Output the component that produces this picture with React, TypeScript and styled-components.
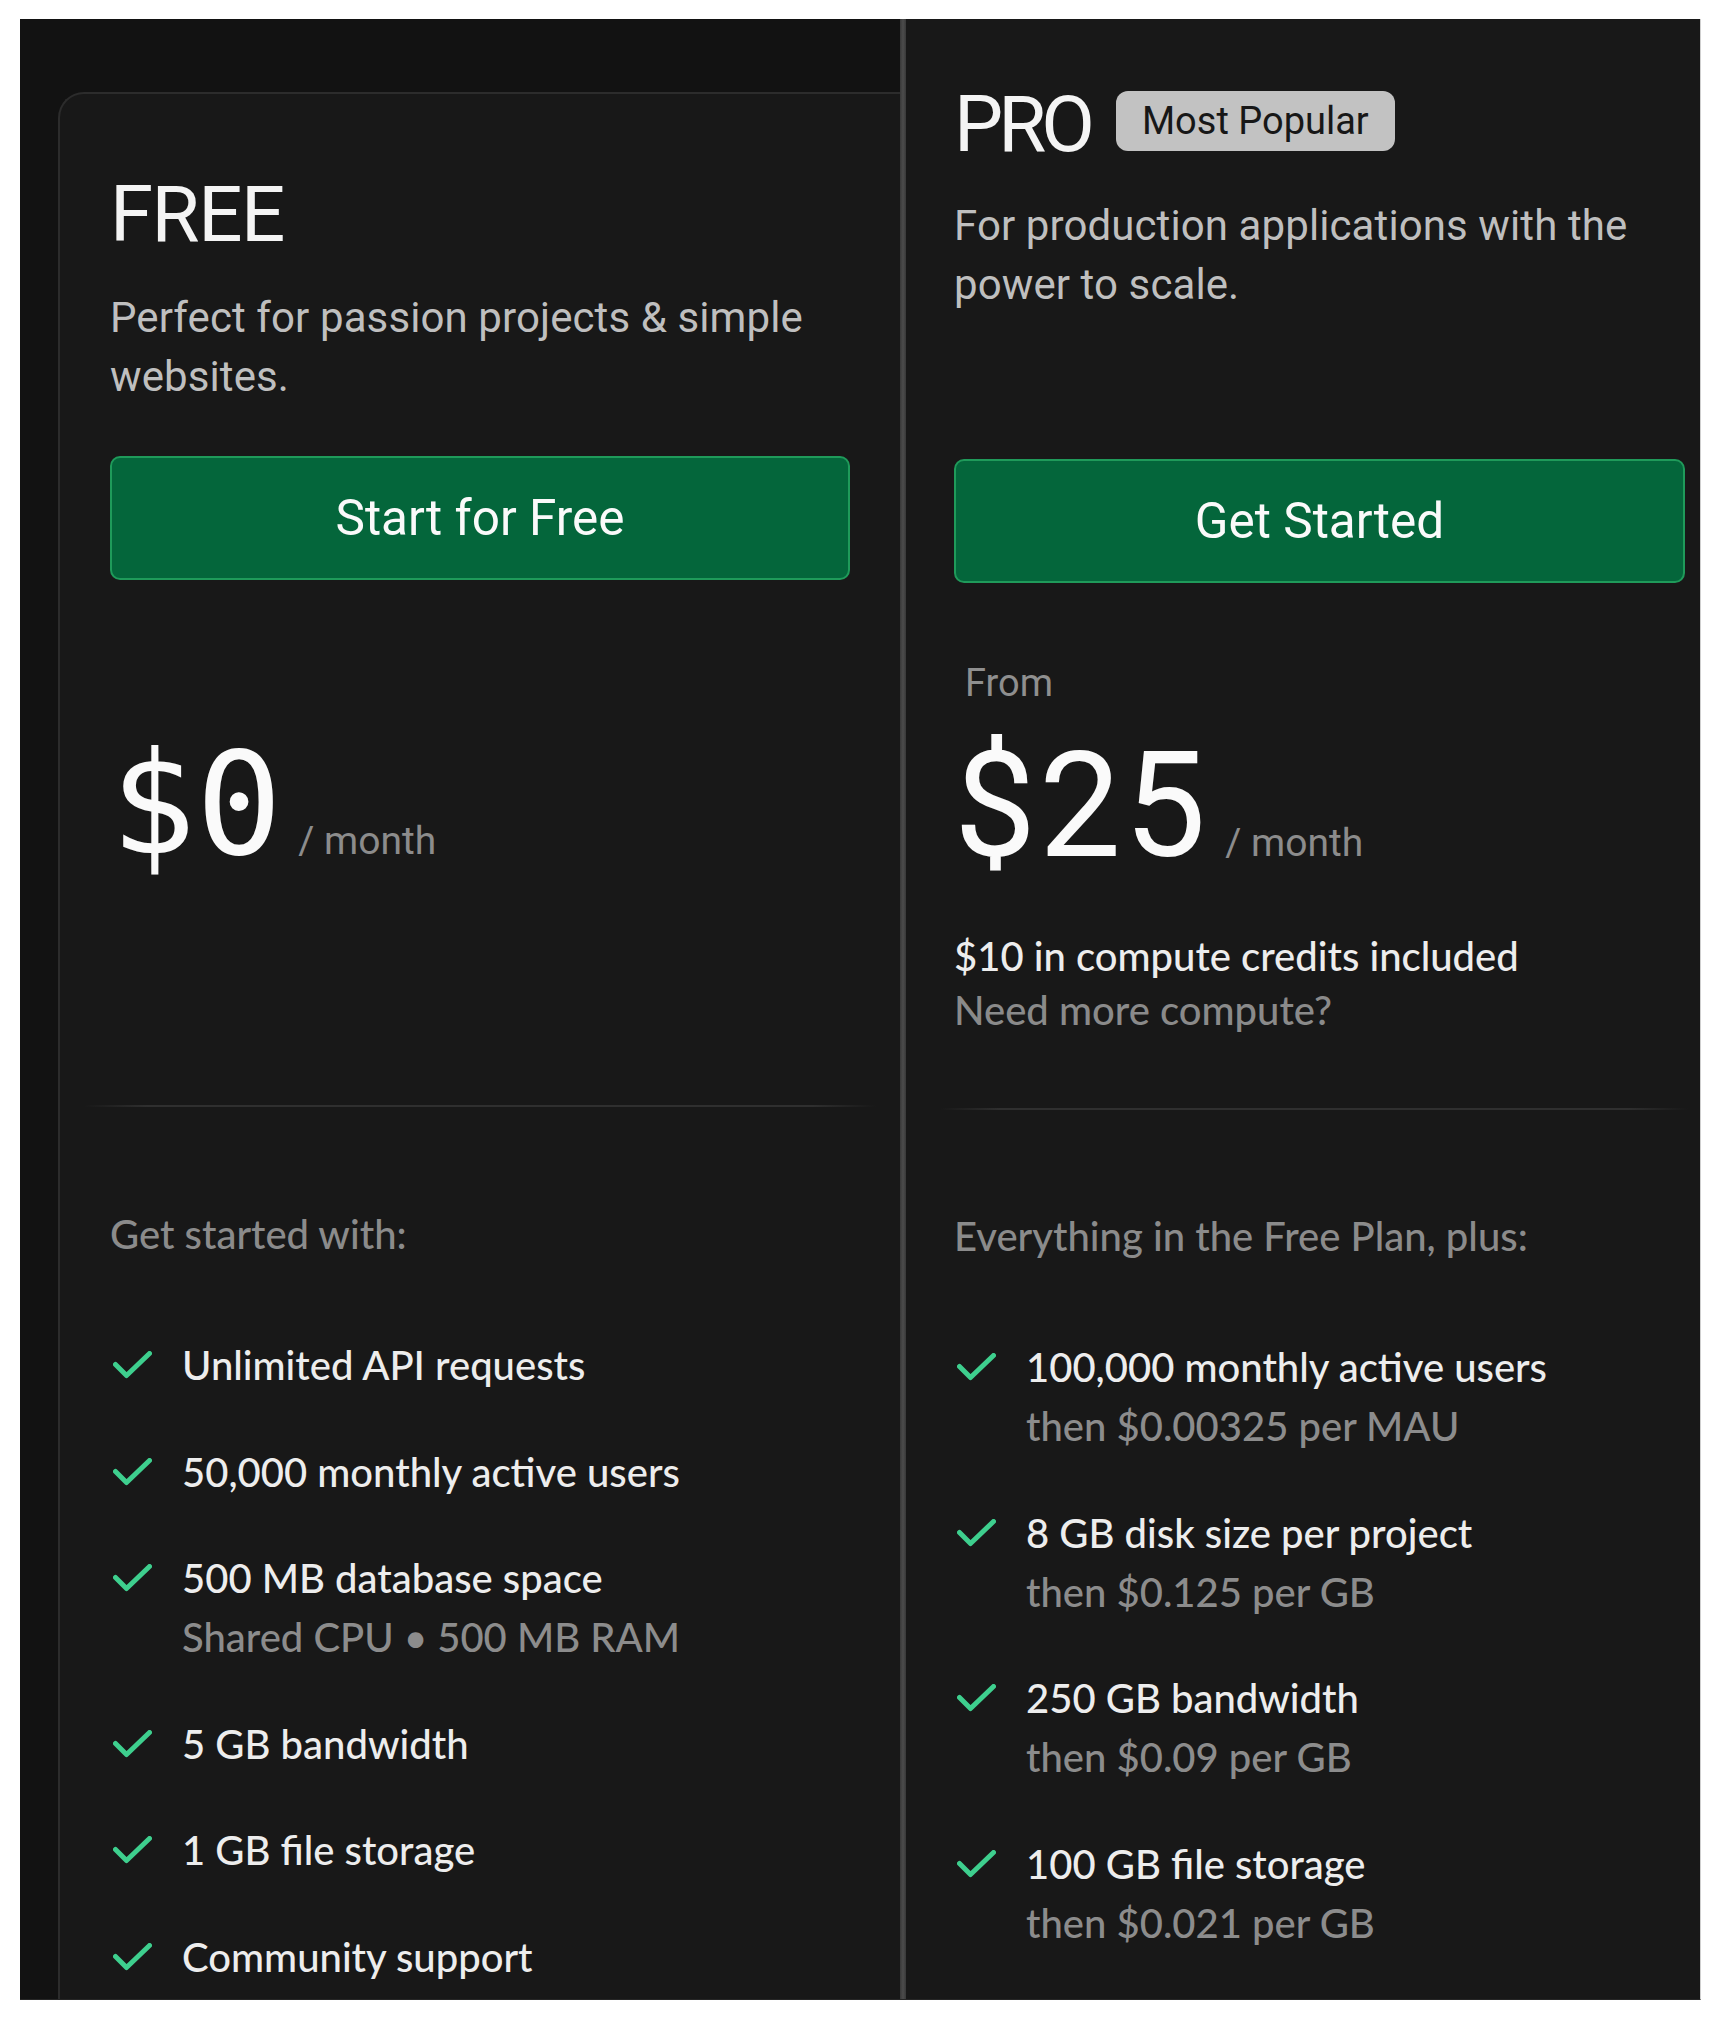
import React from "react";
import styled, { createGlobalStyle } from "styled-components";

const Global = createGlobalStyle`
  html, body { margin: 0; padding: 0; background: #ffffff; }
  *, *::before, *::after { box-sizing: border-box; }
`;

const Frame = styled.div`
  margin: 19px 0 0 20px;
  width: 1681px;
  height: 1981px;
  display: grid;
  grid-template-columns: 880px 6px 1fr;
  background: #121212;
  border-right: 1px solid #cfcfcf;
  border-bottom: 1px solid #262626;
  overflow: hidden;
  font-family: Roboto, "Liberation Sans", sans-serif;
`;

const LeftSection = styled.section`
  padding: 73px 0 0 38px;
  display: flex;
  flex-direction: column;
`;

const Card = styled.div`
  flex: 1;
  background: #181818;
  border-top: 2px solid #2c2c2c;
  border-left: 2px solid #2c2c2c;
  border-top-left-radius: 26px;
  padding: 82px 50px 0 50px;
  display: flex;
  flex-direction: column;
`;

const Separator = styled.div`
  background: linear-gradient(90deg, #383838, #4c4c4c 50%, #383838);
`;

const RightSection = styled.section`
  background: #181818;
  padding: 67px 15px 0 48px;
  display: flex;
  flex-direction: column;
`;

const TitleRow = styled.div`
  display: flex;
  align-items: flex-start;
  gap: 26px;
`;

const Title = styled.h2<{ $spacing: number }>`
  margin: 0;
  font-family: Roboto, "Liberation Sans", sans-serif;
  font-weight: 400;
  font-size: 78px;
  line-height: 78px;
  letter-spacing: ${(p) => p.$spacing}px;
  color: #f4f4f4;
`;

const Badge = styled.span`
  margin-top: 5px;
  height: 60px;
  padding: 0 26px;
  display: inline-flex;
  align-items: center;
  background: #c2c2c2;
  color: #171717;
  border-radius: 12px;
  font-size: 38px;
  font-family: Roboto, "Liberation Sans", sans-serif;
`;

const Desc = styled.p<{ $mt: number }>`
  margin: ${(p) => p.$mt}px 0 0;
  font-size: 42px;
  line-height: 59px;
  letter-spacing: 0.1px;
  color: #bfbfbf;
`;

const CTA = styled.button<{ $mt: number }>`
  margin-top: ${(p) => p.$mt}px;
  width: 100%;
  height: 124px;
  flex-shrink: 0;
  background: #04663b;
  border: 2px solid #1f9a5a;
  border-radius: 10px;
  color: #fafafa;
  font-family: Roboto, "Liberation Sans", sans-serif;
  font-size: 49.5px;
  font-weight: 400;
  cursor: pointer;
`;

const FromLabel = styled.div`
  margin-top: 77px;
  padding-left: 11px;
  font-size: 38px;
  line-height: 46px;
  color: #8f8f8f;
`;

const PriceRow = styled.div<{ $mt: number }>`
  margin-top: ${(p) => p.$mt}px;
  display: flex;
  align-items: baseline;
`;

const Amount = styled.span<{ $mono?: boolean }>`
  font-family: ${(p) =>
    p.$mono ? '"DejaVu Sans Mono", "Liberation Mono", monospace' : 'Roboto, "Liberation Sans", sans-serif'};
  font-size: ${(p) => (p.$mono ? 143 : 146)}px;
  line-height: 1;
  color: #fafafa;
  letter-spacing: ${(p) => (p.$mono ? 0 : 3)}px;
`;

const Per = styled.span`
  margin-left: 16px;
  font-size: 39px;
  color: #8c8c8c;
`;

const Credits = styled.div`
  margin-top: 49px;
  font-family: Lato, Roboto, sans-serif;
  font-weight: 500;
  font-size: 40px;
  line-height: 54px;
  color: #ededed;
`;

const Muted = styled.div`
  color: #8a8a8a;
`;

const HRule = styled.div<{ $mt: number; $left: number; $right: number }>`
  height: 2px;
  flex-shrink: 0;
  margin: ${(p) => p.$mt}px ${(p) => -p.$right}px 0 ${(p) => -p.$left}px;
  background: linear-gradient(90deg, rgba(46, 46, 46, 0), #2f2f2f 8%, #2f2f2f 92%, rgba(46, 46, 46, 0));
`;

const ListHeader = styled.div<{ $mt: number }>`
  margin-top: ${(p) => p.$mt}px;
  font-family: Lato, Roboto, sans-serif;
  font-weight: 500;
  font-size: 40px;
  line-height: 59px;
  color: #8b8b8b;
`;

const List = styled.ul`
  list-style: none;
  margin: 72px 0 0;
  padding: 0;
  display: flex;
  flex-direction: column;
  gap: 47.6px;
`;

const Item = styled.li`
  display: flex;
  align-items: flex-start;
  gap: 30px;
`;

const CheckSvg = styled.svg`
  width: 39px;
  height: 28px;
  margin: 15px 0 0 3px;
  flex-shrink: 0;
`;

const ItemText = styled.div`
  display: flex;
  flex-direction: column;
  font-family: Lato, Roboto, sans-serif;
  font-weight: 500;
  font-size: 40px;
  line-height: 59px;
  color: #ededed;
`;

const Sub = styled.span`
  color: #8c8c8c;
`;

const Check = () => (
  <CheckSvg viewBox="0 0 39 28" fill="none">
    <polyline
      points="2.5,13.5 13.5,24.5 36.5,2.5"
      stroke="#3ecf8e"
      strokeWidth="5"
      strokeLinecap="round"
      strokeLinejoin="round"
    />
  </CheckSvg>
);

type Feature = { main: string; sub?: string };

const freeFeatures: Feature[] = [
  { main: "Unlimited API requests" },
  { main: "50,000 monthly active users" },
  { main: "500 MB database space", sub: "Shared CPU • 500 MB RAM" },
  { main: "5 GB bandwidth" },
  { main: "1 GB file storage" },
  { main: "Community support" },
];

const proFeatures: Feature[] = [
  { main: "100,000 monthly active users", sub: "then $0.00325 per MAU" },
  { main: "8 GB disk size per project", sub: "then $0.125 per GB" },
  { main: "250 GB bandwidth", sub: "then $0.09 per GB" },
  { main: "100 GB file storage", sub: "then $0.021 per GB" },
];

const FeatureList = ({ items }: { items: Feature[] }) => (
  <List>
    {items.map((f) => (
      <Item key={f.main}>
        <Check />
        <ItemText>
          <span>{f.main}</span>
          {f.sub && <Sub>{f.sub}</Sub>}
        </ItemText>
      </Item>
    ))}
  </List>
);

export default function App() {
  return (
    <>
      <Global />
      <Frame>
        <LeftSection>
          <Card>
            <Title $spacing={-1.5}>FREE</Title>
            <Desc $mt={34}>Perfect for passion projects &amp; simple websites.</Desc>
            <CTA $mt={50}>Start for Free</CTA>
            <PriceRow $mt={153}>
              <Amount $mono>$0</Amount>
              <Per>/ month</Per>
            </PriceRow>
            <HRule $mt={229} $left={26} $right={26} />
            <ListHeader $mt={98}>Get started with:</ListHeader>
            <FeatureList items={freeFeatures} />
          </Card>
        </LeftSection>
        <Separator />
        <RightSection>
          <TitleRow>
            <Title $spacing={-5}>PRO</Title>
            <Badge>Most Popular</Badge>
          </TitleRow>
          <Desc $mt={32}>For production applications with the power to scale.</Desc>
          <CTA $mt={145}>Get Started</CTA>
          <FromLabel>From</FromLabel>
          <PriceRow $mt={28}>
            <Amount>$25</Amount>
            <Per>/ month</Per>
          </PriceRow>
          <Credits>
            <div>$10 in compute credits included</div>
            <Muted>Need more compute?</Muted>
          </Credits>
          <HRule $mt={71} $left={14} $right={3} />
          <ListHeader $mt={97}>Everything in the Free Plan, plus:</ListHeader>
          <FeatureList items={proFeatures} />
        </RightSection>
      </Frame>
    </>
  );
}
